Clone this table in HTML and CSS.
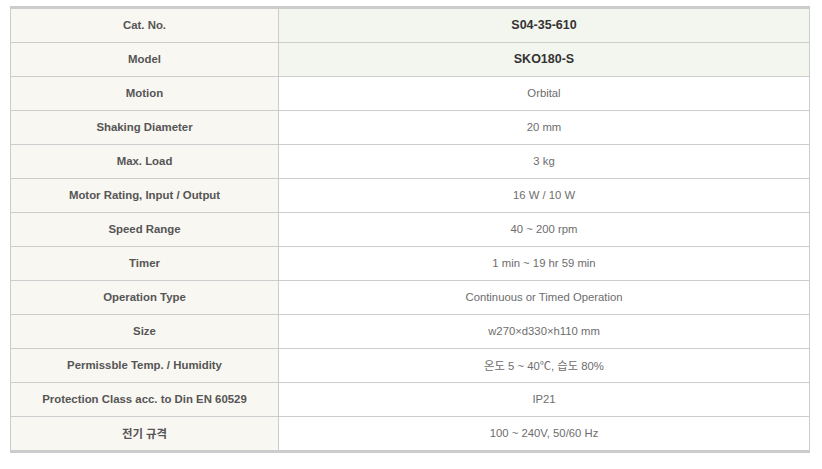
FILE: index.html
```html
<!DOCTYPE html>
<html lang="ko">
<head>
<meta charset="utf-8">
<title>SKO180-S Specifications</title>
<link rel="stylesheet" href="styles.css">
</head>
<body>
<table class="spec">
  <colgroup><col class="col-label"><col class="col-value"></colgroup>
  <tbody>
    <tr class="hl"><th>Cat. No.</th><td class="strong">S04-35-610</td></tr>
    <tr class="hl"><th>Model</th><td class="strong">SKO180-S</td></tr>
    <tr><th>Motion</th><td>Orbital</td></tr>
    <tr><th>Shaking Diameter</th><td>20 mm</td></tr>
    <tr><th>Max. Load</th><td>3 kg</td></tr>
    <tr><th>Motor Rating, Input / Output</th><td>16 W / 10 W</td></tr>
    <tr><th>Speed Range</th><td>40 ~ 200 rpm</td></tr>
    <tr><th>Timer</th><td>1 min ~ 19 hr 59 min</td></tr>
    <tr><th>Operation Type</th><td>Continuous or Timed Operation</td></tr>
    <tr><th>Size</th><td>w270×d330×h110 mm</td></tr>
    <tr><th>Permissble Temp. / Humidity</th><td>온도 5 ~ 40℃, 습도 80%</td></tr>
    <tr><th>Protection Class acc. to Din EN 60529</th><td>IP21</td></tr>
    <tr class="last"><th>전기 규격</th><td>100 ~ 240V, 50/60 Hz</td></tr>
  </tbody>
</table>
</body>
</html>
```
FILE: styles.css
```css
html, body {
  background: #ffffff;
}
body {
  margin: 6px 0 0 10px;
}
.spec {
  width: 800px;
  table-layout: fixed;
  border-collapse: separate;
  border-spacing: 0;
  border-top: 3px solid #cccccc;
  border-bottom: 3px solid #cccccc;
  border-left: 1px solid #cccccc;
  border-right: 1px solid #cccccc;
}
.col-label { width: 268px; }
.spec th,
.spec td {
  height: 32px;
  padding: 0 0 1px 0;
  text-align: center;
  vertical-align: middle;
  border-bottom: 1px solid #cccccc;
  box-sizing: content-box;
}
.spec tr.last th,
.spec tr.last td {
  border-bottom: 0;
}
.spec th {
  background: #f9f7f2;
  border-right: 1px solid #cccccc;
  font-family: "Liberation Sans", "Noto Sans CJK KR", sans-serif;
  font-weight: bold;
  font-size: 11.4px;
  color: #555555;
}
.spec td {
  background: #ffffff;
  font-family: "Liberation Sans", "Noto Sans CJK KR", sans-serif;
  font-size: 11.3px;
  color: #6d6d6d;
}
.spec tr.hl td {
  background: #f3f6ee;
}
.spec td.strong {
  font-weight: bold;
  font-size: 12.5px;
  color: #333333;
}
```
